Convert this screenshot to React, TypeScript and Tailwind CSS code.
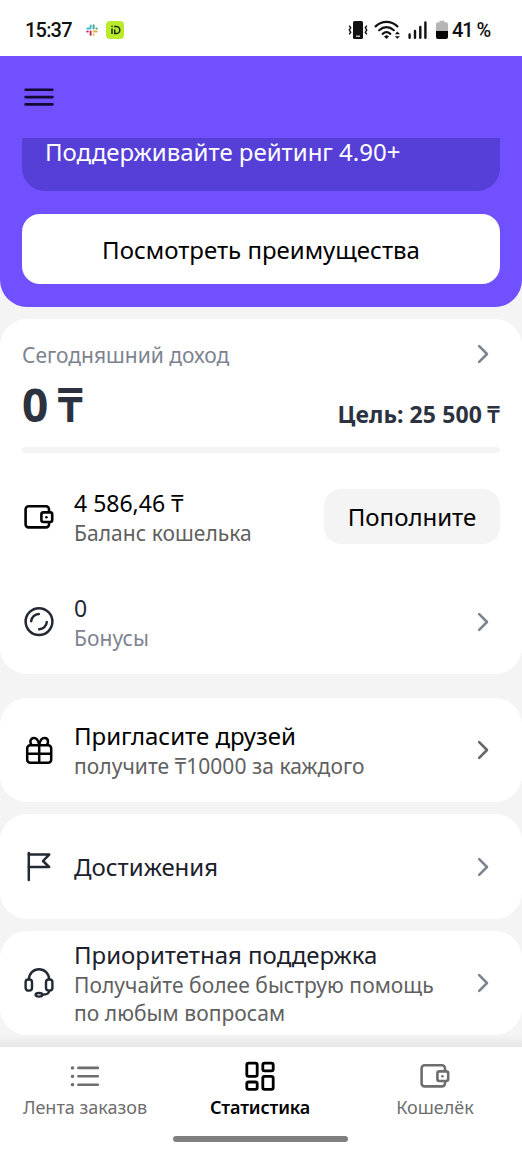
import React from "react";

type IconProps = { className?: string };

function Chevron({ className = "text-[#7d8390]" }: IconProps) {
  return (
    <svg
      className={`h-[20px] w-[12px] shrink-0 ${className}`}
      viewBox="0 0 12 20"
      fill="none"
      stroke="currentColor"
      strokeWidth="2.6"
      strokeLinecap="round"
      strokeLinejoin="round"
    >
      <path d="M2.2 2.2 10 10l-7.8 7.8" />
    </svg>
  );
}

function WalletIcon({ className = "" }: IconProps) {
  return (
    <svg
      className={`h-[32px] w-[32px] ${className}`}
      viewBox="0 0 32 32"
      fill="none"
      stroke="currentColor"
      strokeWidth="2.6"
      strokeLinejoin="round"
    >
      <path d="M26 11V8.2A3 3 0 0 0 23 5.2H5.6A3 3 0 0 0 2.6 8.2V23.4a3 3 0 0 0 3 3H23a3 3 0 0 0 3-3V21" />
      <rect x="18.4" y="11.4" width="10.8" height="9.6" rx="2" />
      <circle cx="23.4" cy="16.2" r="1.3" fill="currentColor" stroke="none" />
    </svg>
  );
}

function CoinIcon() {
  return (
    <svg
      className="h-[32px] w-[32px] text-[#232833]"
      viewBox="0 0 32 32"
      fill="none"
      stroke="currentColor"
      strokeWidth="2.5"
      strokeLinecap="round"
    >
      <circle cx="16" cy="15.6" r="13.4" />
      <path d="M8.2 15.2a7.8 7.8 0 0 1 7.6-7.2" />
      <path d="M23.8 16a7.8 7.8 0 0 1-7.6 7.2" />
    </svg>
  );
}

function GiftIcon() {
  return (
    <svg
      className="h-[32px] w-[32px] text-black"
      viewBox="0 0 32 32"
      fill="none"
      stroke="currentColor"
      strokeWidth="2.5"
      strokeLinejoin="round"
    >
      <rect x="4.2" y="11.2" width="24" height="17.6" rx="3" />
      <path d="M4.2 19.8h24M16.2 11.2v17.6" />
      <path d="M16.2 11c-.8-4.4-2.6-7-5.2-7-2.2 0-3.6 1.6-3.6 3.6 0 1.4.4 2.6 1.2 3.4" />
      <path d="M16.2 11c.8-4.4 2.6-7 5.2-7 2.2 0 3.6 1.6 3.6 3.6 0 1.4-.4 2.6-1.2 3.4" />
    </svg>
  );
}

function FlagIcon() {
  return (
    <svg
      className="h-[32px] w-[32px] text-[#232833]"
      viewBox="0 0 32 32"
      fill="none"
      stroke="currentColor"
      strokeWidth="2.5"
      strokeLinejoin="round"
      strokeLinecap="round"
    >
      <path d="M5.8 2v27" />
      <path d="M5.8 3.6h20.4l-6.2 6.4 6.2 6H5.8" />
    </svg>
  );
}

function HeadsetIcon() {
  return (
    <svg
      className="h-[32px] w-[32px] text-[#232833]"
      viewBox="0 0 32 32"
      fill="none"
      stroke="currentColor"
      strokeWidth="2.4"
      strokeLinejoin="round"
      strokeLinecap="round"
    >
      <path d="M5.8 12.6C6 6.4 10.4 2.2 16 2.2s10 4.2 10.2 10.4" />
      <rect x="2.6" y="12.4" width="6.4" height="11.2" rx="2.8" />
      <rect x="23" y="12.4" width="6.4" height="11.2" rx="2.8" />
      <path d="M26.2 23.6c-.2 3-1.8 4-6.8 4" />
      <ellipse cx="16" cy="27.8" rx="3.4" ry="1.8" />
    </svg>
  );
}

function ListIcon() {
  return (
    <svg
      className="h-[32px] w-[32px]"
      viewBox="0 0 32 32"
      fill="none"
      stroke="currentColor"
      strokeWidth="2.6"
      strokeLinecap="round"
    >
      <path d="M9.4 7.9h19.4M9.4 16.3h19.4M9.4 24.7h19.4" />
      <path d="M3.3 7.9h.4M3.3 16.3h.4M3.3 24.7h.4" strokeWidth="3.2" />
    </svg>
  );
}

function StatsIcon() {
  return (
    <svg
      className="h-[32px] w-[32px]"
      viewBox="0 0 32 32"
      fill="none"
      stroke="currentColor"
      strokeWidth="2.8"
    >
      <rect x="2.8" y="3.2" width="10.4" height="13.2" rx="1.8" />
      <rect x="18.8" y="3.2" width="10.4" height="7.6" rx="1.8" />
      <rect x="2.8" y="22" width="10.4" height="7.4" rx="1.8" />
      <rect x="18.8" y="16.4" width="10.4" height="13" rx="1.8" />
    </svg>
  );
}

function StatusBar() {
  return (
    <div className="flex h-[56px] shrink-0 items-center justify-between bg-white pr-[32px] pl-[25px] pt-[3px] font-[Roboto] text-[20px] font-medium text-[#111]">
      <div className="flex items-center">
        <span className="w-[47px] tracking-[-0.8px] whitespace-nowrap">15:37</span>
        <svg className="ml-[14px] h-[12px] w-[12px]" viewBox="0 0 12 12" strokeWidth="2" strokeLinecap="round">
          <path d="M4.6 1.4v3M1.3 4.6h3" stroke="#49b9d6" />
          <path d="M7.6 1.2v3.4M10.8 4.6h-.4" stroke="#4aab86" />
          <path d="M7.6 7.6h3.2M7.6 10.8v-.4" stroke="#e0b24a" />
          <path d="M4.6 7.6v3.2M1.3 7.6h.5" stroke="#c22a5f" />
        </svg>
        <svg className="ml-[8px] h-[18px] w-[18px]" viewBox="0 0 18 18" fill="none">
          <rect width="18" height="18" rx="4" fill="#b9ea2b" />
          <path d="M6 7.6v5.4M6 4.8v1.2" stroke="#1c2a08" strokeWidth="1.5" />
          <path d="M8 5.4h2.2a3.6 3.6 0 0 1 0 7.2H8.7V8.4" stroke="#1c2a08" strokeWidth="1.5" />
        </svg>
      </div>
      <div className="flex items-center">
        <svg className="h-[20px] w-[20px]" viewBox="0 0 20 20" fill="none" stroke="#111" strokeWidth="1.4">
          <rect x="5" y="1" width="10" height="18" rx="1.6" fill="#111" stroke="none" />
          <path d="M8 16.2h4" stroke="#fff" strokeWidth="1.1" />
          <path d="m1.2 5.6 1.5 2.2L1.2 10l1.5 2.2-1.5 2.2M18.8 5.6l-1.5 2.2 1.5 2.2-1.5 2.2 1.5 2.2" />
        </svg>
        <svg className="ml-[6px] h-[20px] w-[27px]" viewBox="0 0 27 20" fill="none" stroke="#111" strokeWidth="2.2" strokeLinecap="round">
          <path d="M1.6 6.4c6.4-6 15.4-6 21.8 0" />
          <path d="M5.2 10.2c4.4-4 10.2-4 14.6 0" />
          <path d="M8.7 13.8c2.4-2.1 5.2-2.1 7.6 0" />
          <path d="M12.5 15 15 16.4l-2.5 2.6-2.5-2.6z" fill="#111" stroke="none" />
          <path d="m23.4 11.4 2.6 2.8h-5.2zM23.4 18.8l-2.6-2.6H26z" fill="#111" stroke="none" />
        </svg>
        <svg className="ml-[6px] h-[20px] w-[20px]" viewBox="0 0 20 20" fill="none" stroke="#111" strokeWidth="2.4" strokeLinecap="round">
          <path d="M2.6 14.4v3.4M8 11v6.8M13.3 7v10.8M18.4 2.4v15.4" />
        </svg>
        <svg className="ml-[9px] h-[20px] w-[12px]" viewBox="0 0 12 20">
          <path d="M3.6 0.8h4.8v1.4H10a2 2 0 0 1 2 2V11H0V4.2a2 2 0 0 1 2-2h1.6z" fill="#b5b5b5" />
          <path d="M0 11h12v6a2 2 0 0 1-2 2H2a2 2 0 0 1-2-2z" fill="#050505" />
        </svg>
        <span className="ml-[4px] w-[38px] tracking-[-1.1px] whitespace-nowrap">41 %</span>
      </div>
    </div>
  );
}

type RowProps = {
  icon: React.ReactNode;
  title: string;
  subtitle?: React.ReactNode;
  titleClass?: string;
  subtitleClass?: string;
  action?: React.ReactNode;
};

function Row({
  icon,
  title,
  subtitle,
  titleClass = "text-[24px] text-black",
  subtitleClass = "text-[#606060]",
  action = <Chevron />,
}: RowProps) {
  return (
    <div className="flex h-full w-full items-center pr-[33px] pl-[23px]">
      {icon}
      <div className="ml-[19px] flex-1 pt-px whitespace-nowrap">
        <p className={`leading-[30px] ${titleClass}`}>{title}</p>
        {subtitle && (
          <p className={`mt-px text-[21px] leading-[28px] tracking-[0.05px] ${subtitleClass}`}>
            {subtitle}
          </p>
        )}
      </div>
      {action}
    </div>
  );
}

function App() {
  return (
    <div className="flex h-[1151px] w-[522px] flex-col overflow-hidden bg-[#f4f4f4] font-['Noto_Sans',sans-serif]">
      <StatusBar />

      <header className="h-[251px] shrink-0 rounded-b-[27px] bg-[#7050ff] px-[22px]">
        <div className="flex h-[82px] items-center pl-[2px]">
          <svg className="h-[20px] w-[30px]" viewBox="0 0 30 20" stroke="#130a33" strokeWidth="2.6" strokeLinecap="round">
            <path d="M1.6 2.7h26.8M1.6 10.1h26.8M1.6 17.4h26.8" />
          </svg>
        </div>
        <div className="h-[53px] rounded-b-[23px] bg-[#553fd6] px-[23px]">
          <p className="text-[24px] leading-[28px] whitespace-nowrap text-white">
            Поддерживайте рейтинг 4.90+
          </p>
        </div>
        <button className="mt-[23px] block h-[70px] w-full rounded-[18px] bg-white pt-[2px] text-[24px] text-black">
          Посмотреть преимущества
        </button>
      </header>

      <section className="mt-[12px] h-[355px] shrink-0 rounded-[27px] bg-white">
        <div className="px-[22px]">
          <div className="flex h-[48px] items-center justify-between pt-[22px] pr-[11px]">
            <p className="pt-[2px] text-[21px] leading-[28px] text-[#7d8390]">
              Сегодняшний доход
            </p>
            <Chevron />
          </div>
          <div className="flex h-[80px] items-end justify-between pb-[13px] font-bold text-[#2c323f]">
            <p className="flex text-[46px] leading-[60px]">
              0<span className="ml-[9px] font-semibold">₸</span>
            </p>
            <p className="flex text-[23px] leading-[40px] tracking-[0.1px] whitespace-nowrap">
              Цель: 25 500<span className="ml-[5px] font-semibold">₸</span>
            </p>
          </div>
          <div className="h-[6px] rounded-full bg-[#f4f4f4]" />
        </div>
        <div className="mt-[11px] h-[105px]">
          <Row
            icon={<WalletIcon />}
            title="4 586,46 ₸"
            subtitle="Баланс кошелька"
            titleClass="text-[23px] text-black"
            action={
              <button className="-mr-[11px] h-[55px] w-[176px] rounded-[17px] bg-[#f4f4f4] text-[24px] text-black">
                Пополните
              </button>
            }
          />
        </div>
        <div className="h-[105px]">
          <Row
            icon={<CoinIcon />}
            title="0"
            subtitle="Бонусы"
            titleClass="text-[23px] text-[#232833]"
            subtitleClass="text-[#7d8390]"
          />
        </div>
      </section>

      <section className="mt-[24px] h-[104px] shrink-0 rounded-[27px] bg-white">
        <Row
          icon={<GiftIcon />}
          title="Пригласите друзей"
          subtitle="получите ₸10000 за каждого"
          action={<Chevron className="text-[#666]" />}
        />
      </section>

      <section className="mt-[12px] h-[105px] shrink-0 rounded-[27px] bg-white">
        <Row
          icon={<FlagIcon />}
          title="Достижения"
          titleClass="text-[24px] text-[#1c212c]"
        />
      </section>

      <section className="mt-[12px] h-[104px] shrink-0 rounded-[27px] bg-white">
        <Row
          icon={<HeadsetIcon />}
          title="Приоритетная поддержка"
          titleClass="text-[24px] text-[#1c212c]"
          subtitle={
            <>
              Получайте более быструю помощь
              <br />
              по любым вопросам
            </>
          }
        />
      </section>

      <div className="h-[12px] shrink-0 bg-linear-to-b from-[#f4f4f4] to-[#e6e6e6]" />

      <nav className="flex flex-1 flex-col items-center bg-white">
        <div className="grid grid-cols-[170px_180px_170px] self-start pt-[13px] text-[18px] leading-[30px] whitespace-nowrap text-[#6e6e6e]">
          <div className="flex flex-col items-center">
            <ListIcon />
            <span>Лента заказов</span>
          </div>
          <div className="flex flex-col items-center font-semibold text-black">
            <StatsIcon />
            <span className="tracking-[-0.15px]">Статистика</span>
          </div>
          <div className="flex flex-col items-center">
            <WalletIcon />
            <span>Кошелёк</span>
          </div>
        </div>
        <div className="mt-[14px] mr-[2px] h-[6px] w-[175px] rounded-full bg-[#7f7f7f]" />
      </nav>
    </div>
  );
}

export default App;
